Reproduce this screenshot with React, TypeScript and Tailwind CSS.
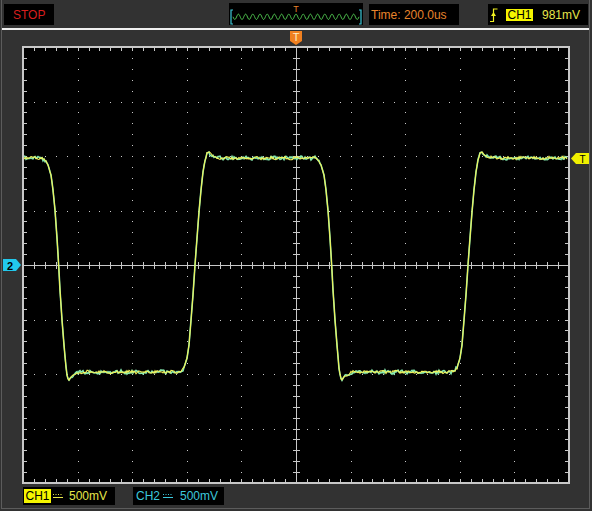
import React from 'react';

// seeded random so the trace noise is stable between renders
function rng(seed: number) {
  let s = seed;
  return () => {
    s = (s + 0x6d2b79f5) | 0;
    let t = Math.imul(s ^ (s >>> 15), 1 | s);
    t = (t + Math.imul(t ^ (t >>> 7), 61 | t)) ^ t;
    return ((t ^ (t >>> 14)) >>> 0) / 4294967296;
  };
}

const HIGH = 158;
const LOW = 372;

const FALL: [number, number][] = [
  [0, 158], [3, 160], [6, 165], [9, 175], [11, 190], [13, 210], [15, 238], [16.5, 262], [18, 290],
  [20, 320], [22, 345], [24, 368], [25.5, 378], [27, 380], [29, 377], [33, 374], [38, 372],
];
const RISE: [number, number][] = [
  [0, 372], [3, 368], [6, 358], [8, 345], [10, 320], [12, 295], [14, 265], [16, 238], [18, 212],
  [20, 190], [22, 172], [24, 160], [26, 153], [28, 152], [30, 155], [34, 157], [40, 158],
];

const KEYS: [number, number][] = [
  [24, HIGH],
  ...FALL.map(([dx, y]) => [42 + dx, y] as [number, number]),
  ...RISE.map(([dx, y]) => [181 + dx, y] as [number, number]),
  ...FALL.map(([dx, y]) => [315 + dx, y] as [number, number]),
  ...RISE.map(([dx, y]) => [454 + dx, y] as [number, number]),
  [567, HIGH],
];

function baseY(x: number) {
  for (let i = 0; i < KEYS.length - 1; i++) {
    const [ax, ay] = KEYS[i];
    const [bx, by] = KEYS[i + 1];
    if (x >= ax && x <= bx) return ay + ((by - ay) * (x - ax)) / (bx - ax || 1);
  }
  return HIGH;
}

function tracePoints(seed: number, amp: number) {
  const r = rng(seed);
  const pts: string[] = [];
  for (let x = 24; x <= 567; x++) {
    const y = baseY(x);
    const flat = Math.min(Math.abs(y - HIGH), Math.abs(y - LOW)) < 5;
    const n = flat ? (r() - 0.5) * amp + Math.sin(x * 0.45 + seed) * 0.6 : (r() - 0.5) * 0.6;
    pts.push(`${x},${(y + n).toFixed(1)}`);
  }
  return pts.join(' ');
}

function Screen() {
  const x0 = 23;
  const y0 = 47;
  const dx = 54.6;
  const dy = 54.5;
  const cx = x0 + 5 * dx;
  const cy = y0 + 4 * dy;
  const c = '#c8c8c8';
  const els: React.ReactNode[] = [];

  // dotted division lines
  for (let k = 1; k < 10; k++) {
    if (k === 5) continue;
    const x = Math.round(x0 + k * dx);
    for (let j = 1; j < 40; j++) {
      els.push(<rect key={`v${k}-${j}`} x={x} y={Math.round(y0 + (j * dy) / 5)} width={1} height={1} fill={c} />);
    }
  }
  for (let k = 1; k < 8; k++) {
    if (k === 4) continue;
    const y = Math.round(y0 + k * dy);
    for (let j = 1; j < 50; j++) {
      els.push(<rect key={`h${k}-${j}`} x={Math.round(x0 + (j * dx) / 5)} y={y} width={1} height={1} fill={c} />);
    }
  }
  // center axes with ticks
  const rcx = Math.round(cx);
  const rcy = Math.round(cy);
  els.push(<rect key="cv" x={rcx} y={48} width={1} height={434} fill={c} />);
  els.push(<rect key="ch" x={24} y={rcy} width={544} height={1} fill={c} />);
  for (let j = 1; j < 40; j++) {
    const y = Math.round(y0 + (j * dy) / 5);
    els.push(<rect key={`ct${j}`} x={rcx - 3} y={y} width={7} height={1} fill={c} />);
    els.push(<rect key={`lt${j}`} x={24} y={y} width={3} height={1} fill={c} />);
    els.push(<rect key={`rt${j}`} x={565} y={y} width={3} height={1} fill={c} />);
  }
  for (let j = 1; j < 50; j++) {
    const x = Math.round(x0 + (j * dx) / 5);
    els.push(<rect key={`cht${j}`} x={x} y={rcy - 3} width={1} height={7} fill={c} />);
    els.push(<rect key={`tt${j}`} x={x} y={48} width={1} height={3} fill={c} />);
    els.push(<rect key={`bt${j}`} x={x} y={479} width={1} height={3} fill={c} />);
  }

  return (
    <svg width={548} height={438} viewBox="22 46 548 438" className="block">
      <rect x={22} y={46} width={548} height={438} fill="#000" />
      <g shapeRendering="crispEdges">{els}</g>
      <rect x={23} y={47} width={546} height={436} fill="none" stroke="#c8c8c8" strokeWidth={2} shapeRendering="crispEdges" />
      <polyline points={tracePoints(7, 3)} fill="none" stroke="#86eab0" strokeWidth={1.6} />
      <polyline points={tracePoints(3, 2.4)} fill="none" stroke="#f2f25a" strokeWidth={1.1} />
    </svg>
  );
}

function MiniWave() {
  const pts: string[] = [];
  for (let x = 4; x <= 130; x += 0.5) {
    pts.push(`${x},${(13.8 + 2.7 * Math.sin(((x - 4) / 7.2) * Math.PI * 2)).toFixed(2)}`);
  }
  return (
    <svg width={134} height={22} className="block">
      <path d="M4 7 H2 V21 H4 M130 7 H132 V21 H130" fill="none" stroke="#3cc8d8" strokeWidth={1.2} />
      <polyline points={pts.join(' ')} fill="none" stroke="#4ec04e" strokeWidth={1} />
      <text x={67} y={8.5} fontSize={9} fill="#e8842c" fontFamily="Liberation Sans, Arial, sans-serif" textAnchor="middle">
        T
      </text>
    </svg>
  );
}

function Coupling({ color }: { color: string }) {
  return (
    <svg width={10} height={6} className="block">
      <path d="M0 1.5 H10" stroke={color} strokeWidth={1} strokeDasharray="1 1.5" />
      <path d="M0 4.5 H10" stroke={color} strokeWidth={1} />
    </svg>
  );
}

export default function App() {
  return (
    <div className="w-[592px] h-[511px] bg-[#323232] overflow-hidden font-['Liberation_Sans',Arial,sans-serif] text-[12px] leading-none">
      <div className="ml-[1px] w-[589px] h-[509px] border-x border-b border-[#5c5c5c] flex flex-col">
        {/* status bar */}
        <div className="h-[28px] flex items-start shrink-0">
          <div className="mt-[4px] ml-[2px] w-[50px] h-[21px] bg-black flex items-center pl-[9px] text-[#d81e1e]">STOP</div>
          <div className="mt-[3px] ml-[175px] w-[134px] h-[22px] bg-black">
            <MiniWave />
          </div>
          <div className="mt-[4px] ml-[6px] w-[90px] h-[21px] bg-black flex items-center pl-[2px] text-[#e8842c]">
            Time: 200.0us
          </div>
          <div className="mt-[4px] ml-[29px] w-[100px] h-[21px] bg-black flex items-center pl-[2px]">
            <svg width={8} height={14} className="block">
              <path d="M0 13.5 H3.5 V1 H7.5" fill="none" stroke="#f0f020" strokeWidth={1.2} />
              <polygon points="1,8 3.5,4 6,8" fill="#f0f020" />
            </svg>
            <span className="ml-[8px] w-[27px] h-[12px] bg-[#f5f500] text-black flex items-center justify-center">CH1</span>
            <span className="ml-[9px] text-[#e6e64a]">981mV</span>
          </div>
        </div>
        <div className="h-[2px] bg-[#f0f0f0] shrink-0" />

        {/* scope screen */}
        <div className="relative mt-[16px] ml-[20px] w-[548px] h-[438px] shrink-0">
          <Screen />
          <svg width={12} height={16} className="absolute left-[268px] top-[-16px]">
            <polygon points="0,1 12,1 12,11 6,15 0,11" fill="#f08020" />
            <text x={6} y={11} fontSize={11} fill="#fff0c8" textAnchor="middle" fontFamily="Liberation Sans, Arial, sans-serif">
              T
            </text>
          </svg>
          <svg width={18} height={12} className="absolute left-[-19px] top-[213px]">
            <polygon points="0,0 13,0 18,6 13,12 0,12" fill="#22c8ec" />
            <text x={7} y={10.5} fontSize={11} fontWeight={700} fill="#000" textAnchor="middle" fontFamily="Liberation Sans, Arial, sans-serif">
              2
            </text>
          </svg>
          <svg width={18} height={11} className="absolute left-[549px] top-[107px]">
            <polygon points="0,5.5 5,0 18,0 18,11 5,11" fill="#f0f000" />
            <text x={11.5} y={9.5} fontSize={10} fill="#000" textAnchor="middle" fontFamily="Liberation Sans, Arial, sans-serif">
              T
            </text>
          </svg>
        </div>

        {/* channel settings */}
        <div className="flex mt-[3px] shrink-0">
          <div className="ml-[21px] w-[92px] h-[18px] bg-black flex items-center">
            <span className="ml-[1px] w-[27px] h-[14px] bg-[#f5f500] text-black flex items-center justify-center">CH1</span>
            <span className="ml-[2px]">
              <Coupling color="#e6e64a" />
            </span>
            <span className="ml-[6px] text-[#e6e64a]">500mV</span>
          </div>
          <div className="ml-[18px] w-[91px] h-[18px] bg-black flex items-center">
            <span className="ml-[3px] text-[#3cc8dc]">CH2</span>
            <span className="ml-[3px]">
              <Coupling color="#3cc8dc" />
            </span>
            <span className="ml-[7px] text-[#3cc8dc]">500mV</span>
          </div>
        </div>
      </div>
    </div>
  );
}
